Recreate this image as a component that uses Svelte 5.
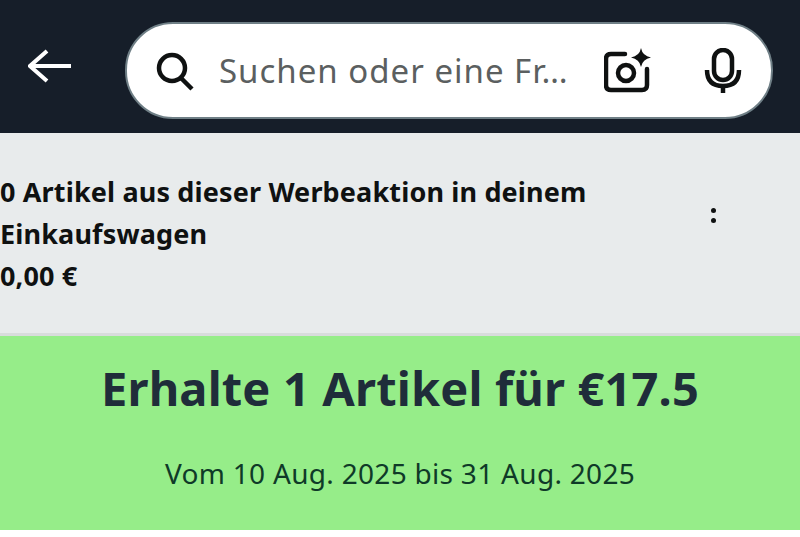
<script>
  const title = 'Erhalte 1 Artikel für €17.5';
</script>

<header class="top">
  <button class="back" aria-label="Zurück">
    <svg width="44" height="36" viewBox="0 0 44 36"><path d="M19 3 L2 18 L19 33 M2 18 H43" fill="none" stroke="#fff" stroke-width="4"/></svg>
  </button>
  <div class="search">
    <svg class="lens" width="40" height="40" viewBox="0 0 40 40"><circle cx="16" cy="17" r="13" fill="none" stroke="#0f1111" stroke-width="4.5"/><path d="M25 27 L36 38" stroke="#0f1111" stroke-width="4.5" fill="none"/></svg>
    <span class="placeholder">Suchen oder eine Fr…</span>
    <svg class="cam" width="48" height="46" viewBox="0 0 48 46"><path d="M21 6 H7 Q2 6 2 11 V37 Q2 42 7 42 H38 Q43 42 43 37 V21" fill="none" stroke="#0f1111" stroke-width="4.5" stroke-linecap="round"/><circle cx="22" cy="25" r="8" fill="none" stroke="#0f1111" stroke-width="4.5"/><path d="M37 0 Q38.500 8 47 9.500 Q38.500 11 37 19 Q35.500 11 27 9.500 Q35.500 8 37 0 Z" fill="#0f1111"/></svg>
    <svg class="mic" width="38" height="46" viewBox="0 0 38 46"><rect x="10" y="2" width="18" height="30" rx="9" fill="none" stroke="#0f1111" stroke-width="4.5"/><path d="M3 22 Q3 38 19 38 Q35 38 35 22" fill="none" stroke="#0f1111" stroke-width="4.5"/><path d="M19 38 V45" stroke="#0f1111" stroke-width="4.5"/></svg>
  </div>
</header>

<section class="cart">
  <div class="cart-text">
    <p>0 Artikel aus dieser Werbeaktion in deinem Einkaufswagen</p>
    <p>0,00 €</p>
  </div>
  <div class="dots" aria-hidden="true"><i></i><i></i></div>
</section>

<section class="promo">
  <h1>{title}</h1>
  <p>Vom 10 Aug. 2025 bis 31 Aug. 2025</p>
</section>

<style>
  :global(body) { margin: 0; background: #fff; font-family: "Noto Sans", "Open Sans", sans-serif; }
  .top { height: 133px; background: #161e29; display: flex; align-items: flex-start; box-sizing: border-box; padding: 22px 27px 0 28px; gap: 53px; }
  .back { width: 44px; height: 36px; padding: 0; border: 0; background: none; overflow: hidden; margin-top: 26px; flex: none; }
  .search { flex: 1; height: 97px; box-sizing: border-box; background: #fff; border: 2px solid #6f7f86; border-radius: 48px; display: flex; align-items: center; padding: 0 29px 0 29px; }
  .lens { flex: none; }
  .placeholder { margin-left: 23px; flex: 1; font-size: 33px; letter-spacing: 1px; color: #5b5f60; white-space: nowrap; }
  .cam { flex: none; margin-right: 52px; }
  .mic { flex: none; }
  .cart { height: 203px; box-sizing: border-box; background: #e8ebec; border-bottom: 3px solid #d8dcdc; display: flex; align-items: flex-start; }
  .cart-text { width: 600px; padding-top: 38px; }
  .cart-text p { margin: 0; font-size: 27px; line-height: 42px; font-weight: 700; letter-spacing: 0.15px; color: #0f1111; }
  .dots { margin: 75px 0 0 111px; display: flex; flex-direction: column; gap: 5px; }
  .dots i { width: 5px; height: 5px; border-radius: 50%; background: #0f1111; display: block; }
  .promo { height: 194px; background: #96ed89; text-align: center; box-sizing: border-box; padding-top: 21px; }
  .promo h1 { margin: 0; font-size: 47px; line-height: 62px; font-weight: 700; letter-spacing: 0.15px; color: #1f2d3a; }
  .promo p { margin: 36px 0 0; font-size: 28px; line-height: 36px; letter-spacing: 0.3px; color: #0f3a28; }
</style>
